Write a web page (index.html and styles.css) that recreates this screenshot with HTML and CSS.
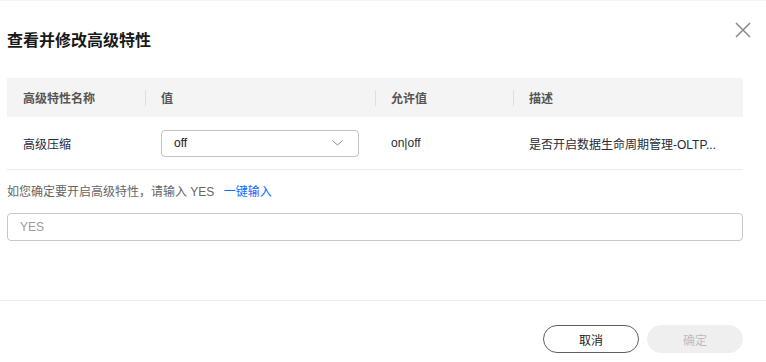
FILE: index.html
```html
<!DOCTYPE html>
<html lang="zh-CN">
<head>
    <meta charset="UTF-8">
    <title>查看并修改高级特性</title>
    <link rel="stylesheet" href="styles.css">
</head>
<body>

    <!-- 弹窗 -->
    <div class="dialog">
        <div class="dialog-header">
            <h2 class="dialog-title">查看并修改高级特性</h2>
            <button class="close-btn" aria-label="关闭">
                <svg width="16" height="16" viewBox="0 0 16 16">
                    <path d="M1 1 L15 15 M15 1 L1 15" stroke="#8a8a8a" stroke-width="1.5" fill="none"/>
                </svg>
            </button>
        </div>

        <div class="dialog-body">
            <table class="feature-table">
                <colgroup>
                    <col class="col-name">
                    <col class="col-value">
                    <col class="col-allow">
                    <col class="col-desc">
                </colgroup>
                <thead>
                    <tr>
                        <th>高级特性名称</th>
                        <th>值</th>
                        <th>允许值</th>
                        <th>描述</th>
                    </tr>
                </thead>
                <tbody>
                    <tr>
                        <td>高级压缩</td>
                        <td>
                            <div class="select">
                                <span>off</span>
                                <svg width="11" height="6" viewBox="0 0 11 6">
                                    <path d="M0.5 0.5 L5.5 5 L10.5 0.5" stroke="#8a8a8a" stroke-width="1" fill="none"/>
                                </svg>
                            </div>
                        </td>
                        <td>on|off</td>
                        <td class="desc">是否开启数据生命周期管理-OLTP...</td>
                    </tr>
                </tbody>
            </table>

            <p class="hint">如您确定要开启高级特性，请输入 YES <a href="#" class="link">一键输入</a></p>
            <input type="text" class="confirm-input" placeholder="YES">
        </div>

        <div class="dialog-footer">
            <button class="btn btn-cancel">取消</button>
            <button class="btn btn-ok" disabled>确定</button>
        </div>
    </div>

</body>
</html>
```

FILE: styles.css
```css
/* 基本样式 */
body {
    margin: 0;
    padding: 0;
    background-color: #ffffff;
    font-family: "Liberation Sans", "Noto Sans CJK SC", sans-serif;
    font-size: 12px;
    color: #191919;
}

/* 弹窗 */
.dialog {
    width: 766px;
    height: 362px;
    border-top: 1px solid #f5f5f5;
    box-sizing: border-box;
    display: flex;
    flex-direction: column;
}

.dialog-header {
    display: flex;
    justify-content: space-between;
    align-items: flex-start;
    padding: 21px 15px 0 7px;
}

.dialog-title {
    margin: 7px 0 0 0;
    font-size: 16px;
    line-height: 24px;
    font-weight: bold;
    color: #191919;
}

.close-btn {
    width: 16px;
    height: 16px;
    padding: 0;
    border: none;
    background: none;
    cursor: pointer;
    display: flex;
}

.dialog-body {
    padding: 0 23px 0 7px;
    margin-top: 25px;
}

/* 表格 */
.feature-table {
    width: 736px;
    table-layout: fixed;
    border-collapse: collapse;
}

.col-name { width: 138px; }
.col-value { width: 230px; }
.col-allow { width: 138px; }
.col-desc { width: 230px; }

.feature-table th {
    position: relative;
    height: 39px;
    padding: 0 16px;
    background-color: #f4f4f4;
    text-align: left;
    font-weight: bold;
    color: #555555;
}

.feature-table th + th::before {
    content: "";
    position: absolute;
    left: 0;
    top: 12px;
    width: 1px;
    height: 16px;
    background-color: #dfdfdf;
}

.feature-table td {
    height: 52px;
    padding: 0 16px;
    border-bottom: 1px solid #ebebeb;
    color: #252b3a;
    white-space: nowrap;
    overflow: hidden;
}

.select {
    width: 198px;
    height: 27px;
    box-sizing: border-box;
    border: 1px solid #c2c2c2;
    border-radius: 4px;
    padding: 0 15px 0 12px;
    display: flex;
    align-items: center;
    justify-content: space-between;
    color: #191919;
}

/* 提示与输入 */
.hint {
    margin: 13px 0 0 0;
    line-height: 18px;
    color: #666666;
}

.link {
    margin-left: 6px;
    color: #0a6cff;
    text-decoration: none;
}

.confirm-input {
    display: block;
    width: 736px;
    height: 28px;
    margin-top: 12px;
    box-sizing: border-box;
    border: 1px solid #c7c7c7;
    border-radius: 4px;
    padding: 0 12px;
    font-family: inherit;
    font-size: 12px;
    outline: none;
}

.confirm-input::placeholder {
    color: #9a9a9a;
}

/* 底部按钮 */
.dialog-footer {
    margin-top: 59px;
    border-top: 1px solid #eeeeee;
    padding: 24px 23px 0 0;
    display: flex;
    justify-content: flex-end;
    gap: 8px;
}

.btn {
    width: 96px;
    height: 28px;
    border-radius: 14px;
    font-family: inherit;
    font-size: 12px;
    cursor: pointer;
}

.btn-cancel {
    background-color: #ffffff;
    border: 1px solid #5f5f5f;
    color: #191919;
}

.btn-ok {
    background-color: #efefef;
    border: 1px solid #efefef;
    color: #bdbdbd;
    cursor: not-allowed;
}
```
